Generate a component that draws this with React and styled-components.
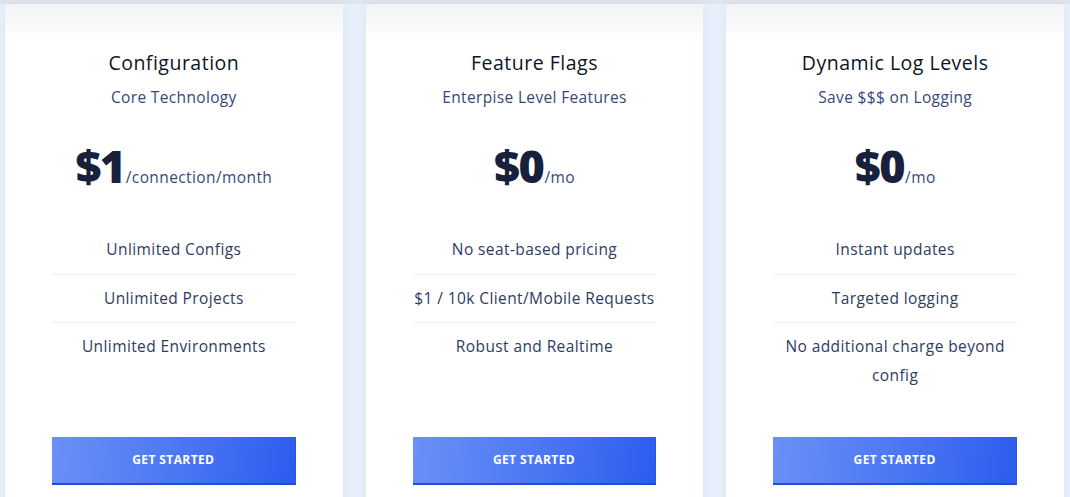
import React from 'react';
import styled, { createGlobalStyle } from 'styled-components';

const GlobalStyle = createGlobalStyle`
  html, body {
    margin: 0;
    padding: 0;
    height: 100%;
    overflow: hidden;
    background: #e8f0fb;
  }
  body {
    font-family: "Open Sans", "Noto Sans", sans-serif;
    -webkit-font-smoothing: antialiased;
  }
`;

const plans = [
  {
    title: 'Configuration',
    subtitle: 'Core Technology',
    price: '$1',
    unit: '/connection/month',
    features: ['Unlimited Configs', 'Unlimited Projects', 'Unlimited Environments'],
  },
  {
    title: 'Feature Flags',
    subtitle: 'Enterpise Level Features',
    price: '$0',
    unit: '/mo',
    features: ['No seat-based pricing', '$1 / 10k Client/Mobile Requests', 'Robust and Realtime'],
  },
  {
    title: 'Dynamic Log Levels',
    subtitle: 'Save $$$ on Logging',
    price: '$0',
    unit: '/mo',
    features: ['Instant updates', 'Targeted logging', 'No additional charge beyond config'],
  },
];

const Section = styled.section`
  background: linear-gradient(#dfe5ee 0, #dfe5ee 4px, #e8f0fb 4px);
  padding: 4px 6px 0 5px;
`;

const Grid = styled.div`
  display: grid;
  grid-template-columns: repeat(3, 1fr);
  gap: 23px;
`;

const Card = styled.div`
  background: linear-gradient(#f2f3f5 0, #ffffff 38px);
  box-shadow: 0 0 10px rgba(180, 195, 220, 0.25);
  padding: 46px 47px 40px;
  display: flex;
  flex-direction: column;
  align-items: stretch;
  text-align: center;
`;

const Title = styled.h3`
  margin: 0;
  font-size: 19.5px;
  line-height: 26px;
  font-weight: 500;
  color: #0e1428;
  letter-spacing: 0.5px;
`;

const Subtitle = styled.p`
  margin: 10px 0 0;
  font-size: 15.5px;
  line-height: 22px;
  color: #36487a;
  letter-spacing: 0.35px;
`;

const PriceRow = styled.div`
  margin-top: 32px;
  display: flex;
  justify-content: center;
  align-items: baseline;
  height: 52px;
`;

const Amount = styled.span`
  font-size: 45px;
  line-height: 52px;
  font-weight: 800;
  color: #18213b;
  letter-spacing: -1.5px;
`;

const Unit = styled.span`
  font-size: 15.5px;
  color: #36487a;
  margin-left: 1px;
  letter-spacing: 0.4px;
`;

const Features = styled.ul`
  list-style: none;
  margin: 34px 0 0;
  padding: 0;
`;

const Feature = styled.li`
  padding: 9.25px 0;
  font-size: 15.5px;
  line-height: 29px;
  color: #2e3c62;
  letter-spacing: 0.4px;
  & + & {
    border-top: 1px solid #eef0f4;
  }
`;

const ButtonWrap = styled.div`
  margin-top: auto;
  padding-top: 37px;
`;

const Button = styled.button`
  height: 48px;
  width: 100%;
  border: none;
  border-bottom: 2px solid #1f4fd6;
  border-right: 1px solid #2a58e0;
  background: linear-gradient(100deg, #6b90f6 0%, #4d78f3 50%, #2c5cee 100%);
  color: #fff;
  font-family: inherit;
  font-size: 12px;
  font-weight: 700;
  letter-spacing: 0.4px;
  text-transform: uppercase;
  cursor: pointer;
`;

const App = () => {
  return (
    <>
      <GlobalStyle />
      <Section>
        <Grid>
          {plans.map(p => (
            <Card key={p.title}>
              <Title>{p.title}</Title>
              <Subtitle>{p.subtitle}</Subtitle>
              <PriceRow>
                <Amount>{p.price}</Amount>
                <Unit>{p.unit}</Unit>
              </PriceRow>
              <Features>
                {p.features.map(f => (
                  <Feature key={f}>{f}</Feature>
                ))}
              </Features>
              <ButtonWrap>
                <Button>Get Started</Button>
              </ButtonWrap>
            </Card>
          ))}
        </Grid>
      </Section>
    </>
  );
};

export default App;
